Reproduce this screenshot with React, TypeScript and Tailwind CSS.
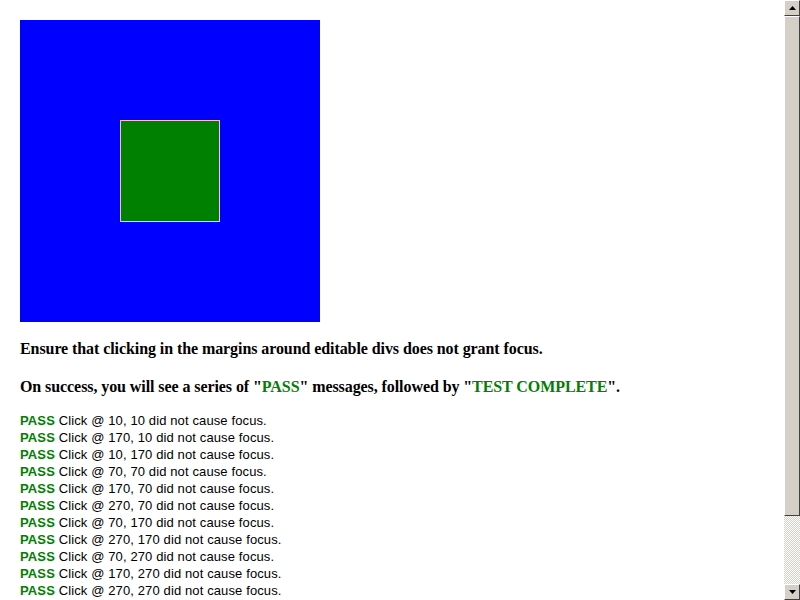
import React from 'react';

const clicks: [number, number][] = [
    [10, 10],
    [170, 10],
    [10, 170],
    [70, 70],
    [170, 70],
    [270, 70],
    [70, 170],
    [270, 170],
    [70, 270],
    [170, 270],
    [270, 270],
];

const Scrollbar: React.FC = () => {
    return (
        <div className="w-4 shrink-0 h-full flex flex-col bg-[#d4d0c8]">
            <div className="h-4 shrink-0 flex items-center justify-center border-t border-l border-t-white border-l-white border-b border-r border-b-[#404040] border-r-[#404040] bg-[#d4d0c8]">
                <svg width="7" height="4" viewBox="0 0 7 4">
                    <path d="M3.5 0 L7 4 L0 4 Z" fill="#000" />
                </svg>
            </div>
            <div className="h-[500px] shrink-0 border-t border-l border-t-white border-l-white border-b border-r border-b-[#404040] border-r-[#404040] bg-[#d4d0c8]" />
            <div className="flex-1 bg-[repeating-conic-gradient(#d4d0c8_0_25%,#ffffff_0_50%)] bg-[length:2px_2px]" />
            <div className="h-4 shrink-0 flex items-center justify-center border-t border-l border-t-white border-l-white border-b border-r border-b-[#404040] border-r-[#404040] bg-[#d4d0c8]">
                <svg width="7" height="4" viewBox="0 0 7 4">
                    <path d="M0 0 L7 0 L3.5 4 Z" fill="#000" />
                </svg>
            </div>
        </div>
    );
};

const App: React.FC = () => {
    return (
        <div className="h-[600px] w-full flex overflow-hidden bg-white">
            <div className="flex-1 overflow-hidden px-5 pt-5">
                <div className="w-[300px] h-[302px] bg-[#0000ff] p-[100px]">
                    <div className="w-[100px] h-[102px] bg-[#008000] border border-[#ffc0cb]" />
                </div>

                <div className="font-['Liberation_Serif',serif] font-bold text-[16px] leading-[20px] tracking-[-0.08px] text-black">
                    <p className="mt-[17px]">Ensure that clicking in the margins around editable divs does not grant focus.</p>
                    <p className="mt-[18px]">
                        On success, you will see a series of "<span className="text-[#008000]">PASS</span>" messages, followed by "<span className="text-[#008000]">TEST COMPLETE</span>".
                    </p>
                </div>

                <div className="mt-[15px] font-['Liberation_Sans',sans-serif] text-[13px] leading-[17px] tracking-[0.12px] text-black">
                    {clicks.map(([x, y]) => (
                        <div key={`${x}-${y}`}>
                            <span className="font-bold text-[#008000]">PASS</span> Click @ {x}, {y} did not cause focus.
                        </div>
                    ))}
                    <div className="mt-[17px]">
                        <span className="font-bold text-[#008000]">TEST COMPLETE</span>
                    </div>
                </div>
            </div>
            <Scrollbar />
        </div>
    );
};

export default App;
